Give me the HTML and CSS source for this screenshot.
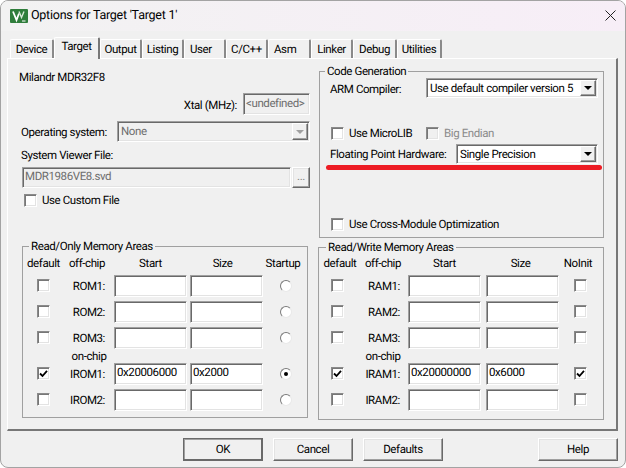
FILE: index.html
```html
<!DOCTYPE html>
<html lang="en">
<head>
<meta charset="utf-8">
<title>Options for Target 'Target 1'</title>
<link rel="stylesheet" href="styles.css">
</head>
<body>
<div class="window">
  <header class="titlebar">
    <svg class="appicon" viewBox="0 0 18 14" width="18" height="14"><rect width="18" height="14" rx="1" fill="#2f7d3b"/><path d="M3 2.500 6.500 11 9 4.500" fill="none" stroke="#fff" stroke-width="1.800"/><path d="M9 2.500 11.500 8.500 14 2.500" fill="none" stroke="#d8e8d8" stroke-width="1.400"/><path d="M12 12h3.500" stroke="#fff" stroke-width="1"/></svg>
    <span class="title">Options for Target 'Target 1'</span>
    <svg class="close" viewBox="0 0 11 11" width="11" height="11"><path d="M.5.5l10 10M10.500.5l-10 10" stroke="#222" stroke-width="1" fill="none"/></svg>
  </header>
  <nav class="tabs">
    <span class="tab t-device">Device</span>
    <span class="tab active">Target</span>
    <span class="tab t-42">Output</span>
    <span class="tab t-42">Listing</span>
    <span class="tab t-42 left">User</span>
    <span class="tab t-42">C/C++</span>
    <span class="tab t-43 left">Asm</span>
    <span class="tab t-42">Linker</span>
    <span class="tab t-device">Debug</span>
    <span class="tab t-45">Utilities</span>
  </nav>
  <main class="panel">
    <section class="topleft">
      <div class="device">Milandr MDR32F8</div>
      <div class="xtal"><span class="xtal-label">Xtal (MHz):</span><span class="field disabled xtal-field">&lt;undefined&gt;</span></div>
      <div class="os"><span class="os-label">Operating system:</span>
        <span class="field disabled select os-select">None<span class="dropbtn off"><i></i></span></span></div>
      <div class="svlabel">System Viewer File:</div>
      <div class="svrow"><span class="field disabled sv-field">MDR1986VE8.svd</span><span class="raised browse">...</span></div>
      <label class="check custom"><span class="box"></span>Use Custom File</label>
    </section>
    <fieldset class="group codegen">
      <legend>Code Generation</legend>
      <div class="cg-body">
        <div class="cg-row compiler"><span class="cg-label">ARM Compiler:</span>
          <span class="field select compiler-select">Use default compiler version 5<span class="dropbtn"><i></i></span></span></div>
        <div class="cg-checks">
          <label class="check micro"><span class="box"></span>Use MicroLIB</label>
          <label class="check muted"><span class="box off"></span>Big Endian</label>
        </div>
        <div class="cg-row fpu"><span class="cg-label">Floating Point Hardware:</span>
          <span class="field select fpu-select">Single Precision<span class="dropbtn"><i></i></span></span></div>
        <div class="redline"></div>
        <label class="check cross"><span class="box"></span>Use Cross-Module Optimization</label>
      </div>
    </fieldset>
    <fieldset class="group mem rom">
      <legend>Read/Only Memory Areas</legend>
      <div class="memgrid">
        <span class="hd">default</span><span class="hd chip">off-chip</span><span class="hd">Start</span><span class="hd size">Size</span><span class="hd last">Startup</span>
        <span class="box"></span><span class="lab">ROM1:</span><span class="field"></span><span class="field"></span><span class="radio"></span>
        <span class="box"></span><span class="lab">ROM2:</span><span class="field"></span><span class="field"></span><span class="radio"></span>
        <span class="box"></span><span class="lab">ROM3:</span><span class="field"></span><span class="field"></span><span class="radio"></span>
        <span></span><span class="hd onchip">on-chip</span><span></span><span></span><span></span>
        <span class="box on"><svg viewBox="0 0 9 9" width="9" height="9"><path d="M1 4.500 3.500 7 8 1.800" fill="none" stroke="#000" stroke-width="1.800"/></svg></span><span class="lab">IROM1:</span><span class="field">0x20006000</span><span class="field">0x2000</span><span class="radio on"></span>
        <span class="box"></span><span class="lab">IROM2:</span><span class="field"></span><span class="field"></span><span class="radio"></span>
      </div>
    </fieldset>
    <fieldset class="group mem ram">
      <legend>Read/Write Memory Areas</legend>
      <div class="memgrid">
        <span class="hd first">default</span><span class="hd chip">off-chip</span><span class="hd">Start</span><span class="hd size">Size</span><span class="hd last">NoInit</span>
        <span class="box"></span><span class="lab">RAM1:</span><span class="field"></span><span class="field"></span><span class="box"></span>
        <span class="box"></span><span class="lab">RAM2:</span><span class="field"></span><span class="field"></span><span class="box"></span>
        <span class="box"></span><span class="lab">RAM3:</span><span class="field"></span><span class="field"></span><span class="box"></span>
        <span></span><span class="hd onchip">on-chip</span><span></span><span></span><span></span>
        <span class="box on"><svg viewBox="0 0 9 9" width="9" height="9"><path d="M1 4.500 3.500 7 8 1.800" fill="none" stroke="#000" stroke-width="1.800"/></svg></span><span class="lab">IRAM1:</span><span class="field">0x20000000</span><span class="field">0x6000</span><span class="box on"><svg viewBox="0 0 9 9" width="9" height="9"><path d="M1 4.500 3.500 7 8 1.800" fill="none" stroke="#000" stroke-width="1.800"/></svg></span>
        <span class="box"></span><span class="lab">IRAM2:</span><span class="field"></span><span class="field"></span><span class="box"></span>
      </div>
    </fieldset>
  </main>
  <footer class="footer">
    <span class="raised btn default">OK</span>
    <span class="raised btn">Cancel</span>
    <span class="raised btn">Defaults</span>
    <span class="spacer"></span>
    <span class="raised btn">Help</span>
  </footer>
</div>
</body>
</html>
```
FILE: styles.css
```css
* { box-sizing: border-box; }
html, body { margin: 0; padding: 0; }
body { width: 626px; height: 468px; background: #fff; font: 11.5px/14px Roboto, "Liberation Sans", Arial, sans-serif; letter-spacing: -0.4px; text-rendering: geometricPrecision; color: #000; overflow: hidden; }

.window { width: 626px; height: 468px; background: #f0f0f0; border: 1px solid #a3a3a3; border-radius: 8px; overflow: hidden; display: flex; flex-direction: column; }

.titlebar { height: 30px; flex: none; display: flex; align-items: center; padding: 0 9px 0 9px; background: linear-gradient(90deg, #f2f2f2, #f7eef7); }
.appicon { flex: none; margin-top: -1px; }
.title { margin-left: 3px; font-size: 12.5px; letter-spacing: -0.25px; flex: 1; }
.close { flex: none; margin-top: -2px; }

.tabs { height: 27px; flex: none; display: flex; align-items: flex-end; padding-left: 9px; }
.tab { height: 19px; display: flex; align-items: center; justify-content: center; background: #f0f0f0; border-top: 1px solid #fff; border-left: 1px solid #fff; border-right: 2px solid #8a8a8a; border-radius: 2px 2px 0 0; }
.tab.left { justify-content: flex-start; padding-left: 5px; }
.t-device { width: 44px; }
.t-42 { width: 42px; }
.t-43 { width: 43px; }
.t-45 { width: 45px; }
.tab.active { width: 46px; height: 22px; padding-bottom: 5px; position: relative; z-index: 1; margin-bottom: -1px; border-right: 2px solid #777; }

.panel { width: 611px; height: 373px; margin-left: 6px; flex: none; border-top: 1px solid #fff; border-left: 1px solid #fff; border-right: 2px solid #777; border-bottom: 2px solid #777; display: grid; grid-template-columns: 306px 296px; grid-template-rows: 167px 1fr; }

.topleft { padding: 11px 0 0 11px; }
.device { height: 14px; }
.xtal { display: flex; justify-content: flex-end; align-items: center; gap: 6px; margin-top: 9px; width: 291px; }
.xtal-label { padding-top: 2px; }
.xtal-field { width: 67px; height: 22px; }
.os { display: flex; align-items: center; margin-top: 6px; margin-left: 2px; width: 289px; }
.os-label { width: 96px; }
.os-select { width: 193px; height: 21px; }
.svlabel { margin: 6px 0 0 2px; }
.svrow { display: flex; gap: 1px; margin: 5px 0 0 3px; width: 288px; }
.sv-field { flex: 1; height: 21px; }
.browse { width: 18px; height: 21px; color: #8a8a8a; line-height: 17px; text-align: center; }
.custom { margin: 5px 0 0 5px; }

.field { display: flex; align-items: center; position: relative; background: #fff; border: 1px solid; border-color: #a0a0a0 #fff #fff #a0a0a0; box-shadow: inset 1px 1px #696969, inset -1px -1px #e3e3e3; padding: 0 1px 3px 2px; white-space: nowrap; overflow: hidden; }
.field.disabled { background: #f0f0f0; color: #6d6d6d; }
.select { padding-left: 3px; padding-bottom: 1px; }
.dropbtn { position: absolute; right: 1px; top: 1px; bottom: 1px; width: 16px; background: #f0f0f0; border: 1px solid; border-color: #fff #696969 #696969 #fff; box-shadow: inset -1px -1px #a0a0a0; display: flex; align-items: center; justify-content: center; }
.dropbtn i { width: 0; height: 0; border: 4px solid transparent; border-top: 4px solid #000; border-bottom: 0; }
.dropbtn.off i { border-top-color: #a0a0a0; }
.raised { display: block; background: #f0f0f0; border: 1px solid; border-color: #fff #696969 #696969 #fff; box-shadow: inset -1px -1px #a0a0a0, inset 1px 1px #e3e3e3; }

.check { display: flex; align-items: center; gap: 5px; }
.box { display: flex; width: 13px; height: 13px; flex: none; align-items: center; justify-content: center; background: #fff; border: 1px solid; border-color: #8a8a8a #fff #fff #8a8a8a; box-shadow: inset 1px 1px #777, inset -1px -1px #e3e3e3; }
.box.off { background: #f0f0f0; }
.muted { color: #8a8a8a; }

.group { margin: 0; padding: 0; border: 1px solid #a0a0a0; min-width: 0; }
.group legend { padding: 0 2px; margin-left: 6px; line-height: 14px; }

.codegen { width: 285px; height: 174px; margin: 5px 0 0 5px; }
.codegen legend { margin-left: 5px; }
.cg-body { padding-left: 10px; }
.cg-row { display: flex; align-items: center; }
.compiler { width: 268px; }
.compiler .cg-label { width: 96px; padding-top: 2px; }
.compiler-select { width: 172px; height: 20px; }
.cg-checks { display: flex; margin-top: 28px; margin-left: 1px; }
.micro { width: 95px; }
.fpu { margin-top: 4px; width: 268px; }
.fpu .cg-label { width: 126px; white-space: nowrap; }
.fpu-select { width: 142px; height: 20px; }
.redline { height: 5px; width: 276px; margin: 1px 0 0 -4px; background: #ed1c24; border-radius: 3px; }
.cross { margin: 47px 0 0 1px; }

.rom { width: 286px; height: 179px; margin: 13px 0 0 14px; }
.ram { width: 286px; height: 180px; margin: 14px 0 0 4px; }
.ram legend { margin-left: 7px; }
.memgrid { display: grid; grid-template-rows: 15px 21px 21px 21px 5px 21px 21px; row-gap: 5px; align-items: center; justify-items: center; }
.rom .memgrid { grid-template-columns: 41px 44px 73px 73px 40px; column-gap: 3px; margin-top: 2px; }
.ram .memgrid { grid-template-columns: 37px 42px 73px 73px 33px; column-gap: 5px; margin-top: 1px; }
.memgrid .field { width: 100%; height: 22px; }
.hd { white-space: nowrap; padding-top: 1px; }
.rom .chip { margin-right: 4px; }
.rom .size { margin-right: 8px; }
.ram .size { margin-right: 4px; }
.ram .first { margin-left: 5px; }
.rom .last { margin-right: 6px; }
.ram .last { margin-right: 5px; }
.ram .hd.chip, .ram .onchip { margin-left: 2px; }
.lab { justify-self: end; white-space: nowrap; }
.rom .lab { margin-right: 6px; }
.ram .lab { margin-right: 3px; }
.radio { width: 12px; height: 12px; border-radius: 50%; background: #fff; border: 1px solid; border-color: #7a7a7a #e8e8e8 #e8e8e8 #7a7a7a; display: flex; align-items: center; justify-content: center; }
.radio.on::after { content: ""; width: 4px; height: 4px; background: #000; border-radius: 50%; }

.footer { flex: 1; display: flex; padding: 7px 7px 0 182px; gap: 10px; align-items: flex-start; }
.spacer { flex: 1; }
.btn { width: 80px; height: 23px; text-align: center; line-height: 20px; }
.btn.default { border-color: #696969; box-shadow: inset -1px -1px #696969, inset 1px 1px #a0a0a0; }
```
